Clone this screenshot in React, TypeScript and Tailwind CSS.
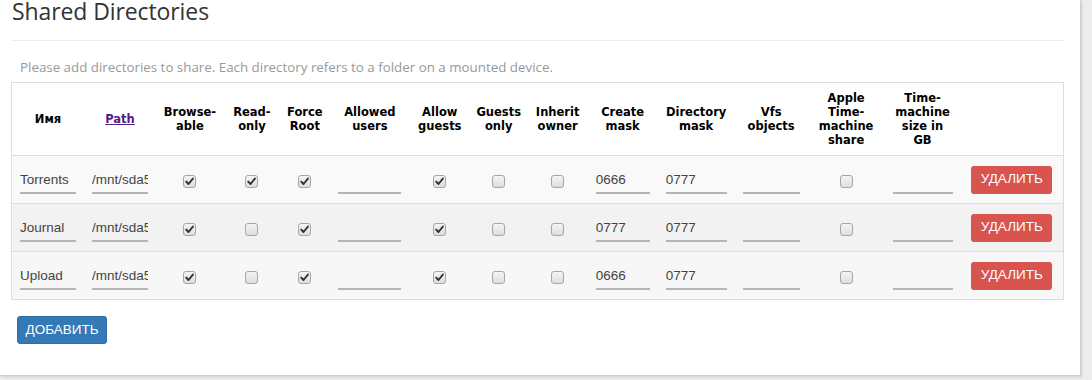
import React from "react";

type Row = {
  name: string;
  path: string;
  browseable: boolean;
  readOnly: boolean;
  forceRoot: boolean;
  allowGuests: boolean;
  guestsOnly: boolean;
  inheritOwner: boolean;
  createMask: string;
  dirMask: string;
  appleTm: boolean;
  bg: string;
};

const ROWS: Row[] = [
  { name: "Torrents", path: "/mnt/sda5", browseable: true, readOnly: true, forceRoot: true, allowGuests: true, guestsOnly: false, inheritOwner: false, createMask: "0666", dirMask: "0777", appleTm: false, bg: "bg-[#f9f9f9]" },
  { name: "Journal", path: "/mnt/sda5", browseable: true, readOnly: false, forceRoot: true, allowGuests: true, guestsOnly: false, inheritOwner: false, createMask: "0777", dirMask: "0777", appleTm: false, bg: "bg-[#f2f2f2]" },
  { name: "Upload", path: "/mnt/sda5", browseable: true, readOnly: false, forceRoot: true, allowGuests: true, guestsOnly: false, inheritOwner: false, createMask: "0666", dirMask: "0777", appleTm: false, bg: "bg-[#f7f7f7]" },
];

const WIDTHS = [72, 72, 68, 56, 50, 80, 60, 58, 60, 70, 77, 73, 77, 76, 103];

function Check({ on }: { on: boolean }) {
  return (
    <span className="inline-flex h-[13px] w-[13px] items-center justify-center rounded-[3px] border border-[#a6a6a6] bg-gradient-to-b from-[#f4f4f4] to-[#dedede] align-middle">
      {on && (
        <svg width="9" height="9" viewBox="0 0 9 9">
          <path d="M1.2 4.6 L3.5 7 L7.9 1.6" fill="none" stroke="#333" strokeWidth="1.9" strokeLinecap="round" strokeLinejoin="round" />
        </svg>
      )}
    </span>
  );
}

function Field({ value, w }: { value?: string; w: string }) {
  return (
    <div className={`${w} h-[29px] overflow-hidden whitespace-nowrap border-b-2 border-[#b5b5b5] pt-[5px] text-left font-['Liberation_Sans',Arial,sans-serif] text-[13.5px] text-[#444]`}>
      {value}
    </div>
  );
}

const HEADERS: string[][] = [
  ["Имя"],
  ["Path"],
  ["Browse-", "able"],
  ["Read-", "only"],
  ["Force", "Root"],
  ["Allowed", "users"],
  ["Allow", "guests"],
  ["Guests", "only"],
  ["Inherit", "owner"],
  ["Create", "mask"],
  ["Directory", "mask"],
  ["Vfs", "objects"],
  ["Apple", "Time-", "machine", "share"],
  ["Time-", "machine", "size in", "GB"],
  [],
];

export default function App() {
  return (
    <div className="h-[380px] w-[1092px] overflow-hidden bg-[#ececec] font-['Open_Sans',sans-serif]">
      <div className="flow-root h-[376px] w-[1081px] border-r border-b border-[#cfcfcf] bg-white shadow-[1px_1px_2px_rgba(0,0,0,0.12)]">
        <div className="pl-[12px] pr-[16px]">
          <h1 className="-mt-[5px] text-[23px] leading-[32px] tracking-[-0.1px] text-[#333]">Shared Directories</h1>
          <div className="mt-[13px] border-t border-[#eee]" />
          <p className="mt-[17px] pl-[8px] text-[13.35px] leading-[18px] text-[#999]">
            Please add directories to share. Each directory refers to a folder on a mounted device.
          </p>
          <table className="mt-[6px] -ml-[1px] table-fixed border-collapse border border-[#ddd]">
            <colgroup>
              {WIDTHS.map((w, i) => (
                <col key={i} style={{ width: w }} />
              ))}
            </colgroup>
            <thead>
              <tr className="h-[73px] border-b border-[#ddd]">
                {HEADERS.map((lines, i) => (
                  <th key={i} className="px-[2px] align-middle text-center font-['DejaVu_Sans',Verdana,sans-serif] text-[11.5px] font-bold leading-[14px] text-black">
                    {i === 1 ? (
                      <span className="text-[#551a8b] underline">Path</span>
                    ) : (
                      lines.map((l) => <div key={l}>{l}</div>)
                    )}
                  </th>
                ))}
              </tr>
            </thead>
            <tbody>
              {ROWS.map((r) => (
                <tr key={r.name} className={`h-[48px] border-b border-[#ddd] ${r.bg}`}>
                  <td className="px-[8px]"><Field value={r.name} w="w-[56px]" /></td>
                  <td className="px-[8px]"><Field value={r.path} w="w-[56px]" /></td>
                  <td className="text-center"><Check on={r.browseable} /></td>
                  <td className="text-center"><Check on={r.readOnly} /></td>
                  <td className="text-center"><Check on={r.forceRoot} /></td>
                  <td className="px-[8px]"><Field w="w-[63px]" /></td>
                  <td className="text-center"><Check on={r.allowGuests} /></td>
                  <td className="text-center"><Check on={r.guestsOnly} /></td>
                  <td className="text-center"><Check on={r.inheritOwner} /></td>
                  <td className="px-[8px]"><Field value={r.createMask} w="w-[54px]" /></td>
                  <td className="px-[8px]"><Field value={r.dirMask} w="w-[61px]" /></td>
                  <td className="px-[8px]"><Field w="w-[57px]" /></td>
                  <td className="text-center"><Check on={r.appleTm} /></td>
                  <td className="px-[8px]"><Field w="w-[60px]" /></td>
                  <td className="text-center">
                    <button className="h-[28px] w-[81px] rounded-[3px] bg-[#d9534f] font-['Liberation_Sans',Arial,sans-serif] text-[13.5px] text-white">
                      УДАЛИТЬ
                    </button>
                  </td>
                </tr>
              ))}
            </tbody>
          </table>
          <button className="mt-[16px] ml-[5px] h-[28px] w-[90px] rounded-[3px] border border-[#2e6da4] bg-[#337ab7] font-['Liberation_Sans',Arial,sans-serif] text-[13.5px] text-white">
            ДОБАВИТЬ
          </button>
        </div>
      </div>
    </div>
  );
}
